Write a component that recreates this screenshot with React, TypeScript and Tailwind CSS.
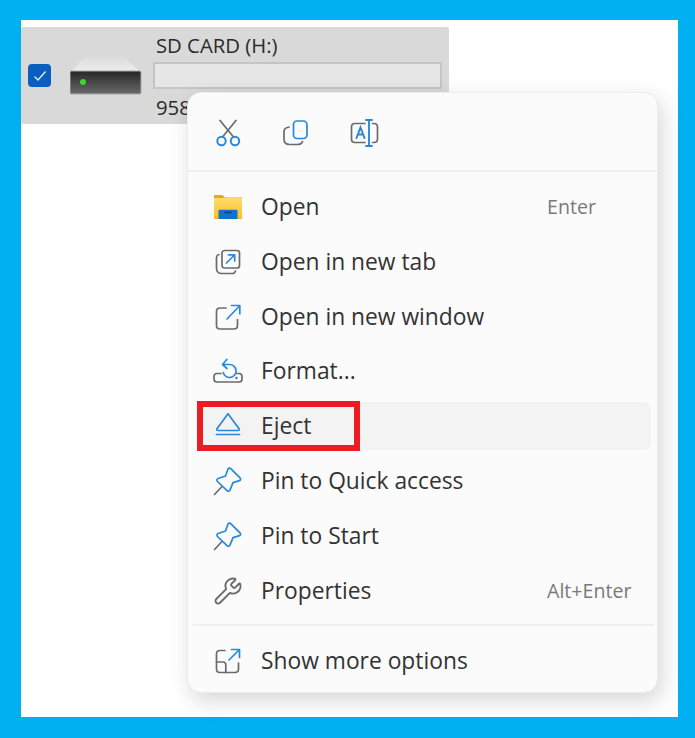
import type { ReactNode } from 'react';
import { Wrench } from 'lucide-react';

const GRAY = '#6b6b6b';
const BLUE = '#2a88dc';

function FolderIcon() {
  return (
    <svg width="28" height="24" viewBox="0 0 28 24">
      <defs>
        <linearGradient id="folderBody" x1="0" y1="0" x2="0" y2="1">
          <stop offset="0" stopColor="#ffdc6c" />
          <stop offset="1" stopColor="#fbbd22" />
        </linearGradient>
      </defs>
      <path d="M0 1.2C0 .5.5 0 1.2 0h7.3L11 2.5h17V8H0z" fill="#e7a90f" />
      <rect x="0" y="3" width="28" height="21" fill="url(#folderBody)" />
      <path d="M4.500 16c0-.8.5-1.300 1.300-1.300h16.400c.8 0 1.300.5 1.300 1.300v8h-19z" fill="#0b74cf" />
      <rect x="10.500" y="16.800" width="7" height="1.400" fill="#063f7e" />
    </svg>
  );
}

function NewTabIcon() {
  return (
    <svg width="26" height="26" viewBox="0 0 26 26" fill="none" strokeWidth="1.700" strokeLinecap="round" strokeLinejoin="round">
      <rect x="7" y="1.500" width="17.500" height="17.500" rx="2.500" stroke={GRAY} />
      <path d="M4 5.500C2.500 6 1.500 7 1.500 8.500v11c0 2.800 2.200 5 5 5h11c1.500 0 2.500-1 3-2.500" stroke={GRAY} />
      <path d="M11.500 14 19.500 6M13.500 5.800h6.200V12" stroke={BLUE} />
    </svg>
  );
}

function NewWindowIcon() {
  return (
    <svg width="26" height="26" viewBox="0 0 26 26" fill="none" strokeWidth="1.700" strokeLinecap="round" strokeLinejoin="round">
      <path d="M11 4H5C3 4 1.500 5.500 1.500 7.500v14c0 2 1.500 3.500 3.500 3.500h14c2 0 3.500-1.500 3.500-3.500v-6" stroke={GRAY} />
      <path d="M12 15 24.500 2M16.500 1.500h8.300v8.300" stroke={BLUE} />
    </svg>
  );
}

function FormatIcon() {
  return (
    <svg width="30" height="26" viewBox="0 0 30 26" fill="none" strokeWidth="1.700" strokeLinecap="round" strokeLinejoin="round">
      <path d="M8 15.500H4c-1.800 0-3 1.200-3 3v2.500c0 1.800 1.200 3 3 3h22c1.800 0 3-1.200 3-3v-2.500c0-1.800-1.200-3-3-3h-2.500" stroke={GRAY} />
      <circle cx="23.500" cy="20" r="1.200" fill={GRAY} />
      <path d="M10 6.500h6.500a6.500 6.500 0 1 1-6.300 8M13.800 1.500 9.500 6.500l4.500 4" stroke={BLUE} />
    </svg>
  );
}

function EjectIcon() {
  return (
    <svg width="26" height="26" viewBox="0 0 26 26" fill="none" stroke={BLUE} strokeWidth="1.700" strokeLinecap="round" strokeLinejoin="round">
      <path d="M13 .8 24 15.800c.5.8.1 1.700-.8 1.700H2.800c-.9 0-1.300-.9-.8-1.700z" />
      <path d="M1.500 21.500h23" />
    </svg>
  );
}

function PinIcon() {
  return (
    <svg width="30" height="30" viewBox="0 0 30 30" fill="none" strokeWidth="1.700" strokeLinecap="round" strokeLinejoin="round">
      <path d="M1.500 28.500 9 20.500" stroke={GRAY} />
      <path d="M15 3c.8-1 2-1.200 3-.2l9 9c1 1 .8 2.400-.5 2.800l-6.500 2-3 7.500c-.5 1.300-2 1.500-3 .5L4.500 15.500c-1-1-.7-2.500.6-3l7.400-2.500z" stroke={BLUE} />
    </svg>
  );
}

function ShowMoreIcon() {
  return (
    <svg width="26" height="26" viewBox="0 0 26 26" fill="none" strokeWidth="1.700" strokeLinecap="round" strokeLinejoin="round">
      <path d="M10 2.500H5C3 2.500 1.500 4 1.500 6v15c0 2 1.500 3.500 3.500 3.500h15c2 0 3.500-1.500 3.500-3.500v-6" stroke={GRAY} />
      <path d="M1.500 14H8c1.500 0 2.800 1.200 2.800 2.800v7.700" stroke={GRAY} />
      <path d="M14 12 24 2M16.500 1.500h8v8" stroke={BLUE} />
    </svg>
  );
}

function CutIcon() {
  return (
    <svg width="32" height="32" viewBox="0 0 32 32" fill="none" strokeWidth="1.700" strokeLinecap="round">
      <path d="M8 3.500 21.500 20M24 3.500 10.500 20" stroke={GRAY} />
      <circle cx="9.500" cy="24" r="4.200" stroke={BLUE} strokeWidth="2" />
      <circle cx="23" cy="24" r="4.200" stroke={BLUE} strokeWidth="2" />
    </svg>
  );
}

function CopyIcon() {
  return (
    <svg width="28" height="28" viewBox="0 0 28 28" fill="none" strokeWidth="1.700" strokeLinecap="round">
      <rect x="11.500" y="2" width="13.500" height="17.500" rx="3.500" stroke={BLUE} />
      <path d="M7 8C3.500 8.500 2 10 2 13v7c0 3.500 2 5.500 5.500 5.500H15c3 0 5-1 5.500-3" stroke={GRAY} />
    </svg>
  );
}

function RenameIcon() {
  return (
    <svg width="30" height="30" viewBox="0 0 30 30" fill="none" strokeWidth="1.700" strokeLinecap="round">
      <path d="M16 5.500H6C4 5.500 2.500 7 2.500 9v12c0 2 1.500 3.500 3.500 3.500h10M23.500 5.500H25c2 0 3.500 1.500 3.500 3.500v12c0 2-1.500 3.500-3.500 3.500h-1.500" stroke={GRAY} />
      <path d="M7.500 20 11.500 9.500 15.500 20M9 16.500h5" stroke={BLUE} strokeWidth="2" />
      <path d="M17 2h6M17 28h6M20 2v26" stroke={BLUE} strokeWidth="1.900" />
    </svg>
  );
}

function DriveIcon() {
  return (
    <svg width="72" height="38" viewBox="0 0 72 38">
      <defs>
        <linearGradient id="driveFront" x1="0" y1="0" x2="0" y2="1">
          <stop offset="0" stopColor="#262626" />
          <stop offset="1" stopColor="#6a6a6a" />
        </linearGradient>
        <linearGradient id="driveTop" x1="0" y1="0" x2="0" y2="1">
          <stop offset="0" stopColor="#dcdcdc" />
          <stop offset="1" stopColor="#ececec" />
        </linearGradient>
      </defs>
      <path d="M15 0h40l14 14H2z" fill="url(#driveTop)" />
      <rect x="0" y="14" width="71" height="23" rx="1.500" fill="url(#driveFront)" stroke="#aaaaaa" />
      <circle cx="13" cy="25" r="3" fill="#39d62c" />
    </svg>
  );
}

type MenuRowProps = {
  icon: ReactNode;
  label: string;
  shortcut?: string;
  active?: boolean;
};

function MenuRow({ icon, label, shortcut, active }: MenuRowProps) {
  return (
    <div className="h-[54.8px] flex items-center">
      <div className={`h-[48px] w-full flex items-center pr-[18px] rounded-[6px] ${active ? 'bg-[#f3f3f3]' : ''}`}>
        <span className="w-[64px] shrink-0 pr-[2px] flex justify-center">{icon}</span>
        <span className="flex-1 text-[22.8px] text-[#333333]">{label}</span>
        {shortcut && <span className="w-[86px] text-[19.6px] text-[#7a7a7a]">{shortcut}</span>}
      </div>
    </div>
  );
}

export default function App() {
  return (
    <div className="w-[695px] h-[738px] bg-[#00b0f0] pt-[20px] pl-[21px] pr-[17px] pb-[21px] font-['Open_Sans',sans-serif] overflow-hidden">
      <div className="relative h-full bg-white pt-[7px]">
        {/* 선택된 드라이브 */}
        <div className="w-[428px] h-[97px] bg-[#d9d9d9] rounded-[2px] flex items-center pl-[7px]">
          <span className="w-[23px] h-[23px] rounded-[4px] bg-[#0a5ebd] flex items-center justify-center">
            <svg width="14" height="12" viewBox="0 0 14 12" fill="none" stroke="#e8f1fb" strokeWidth="1.300">
              <path d="M1.500 6.500 5 10l7.500-8.500" />
            </svg>
          </span>
          <span className="ml-[19px]">
            <DriveIcon />
          </span>
          <div className="ml-[11px] w-[289px] text-[#2b2b2b] text-[20.3px]">
            <div className="pl-[3px] h-[35px] leading-[36px]">SD CARD (H:)</div>
            <div className="h-[27px] border-2 border-[#c5c5c5] bg-[#e6e6e6]" />
            <div className="pl-[3px] h-[35px] leading-[36px]">958</div>
          </div>
        </div>

        {/* 컨텍스트 메뉴 */}
        <div className="absolute left-[166px] top-[72px] w-[471px] h-[601px] rounded-[14px] bg-[#fbfbfb] border border-[#ececec] shadow-[4px_8px_22px_rgba(0,0,0,0.16)]">
          <div className="h-[79px] pt-[3px] border-b-2 border-[#efefef] flex items-center">
            <span className="w-[32px] ml-[24px] flex justify-center"><CutIcon /></span>
            <span className="w-[32px] ml-[36px] flex justify-center"><CopyIcon /></span>
            <span className="w-[32px] ml-[36px] flex justify-center"><RenameIcon /></span>
          </div>
          <div className="pt-[7.7px] ml-[9px] mr-[6px]">
            <MenuRow icon={<FolderIcon />} label="Open" shortcut="Enter" />
            <MenuRow icon={<NewTabIcon />} label="Open in new tab" />
            <MenuRow icon={<NewWindowIcon />} label="Open in new window" />
            <MenuRow icon={<FormatIcon />} label="Format..." />
            <MenuRow icon={<EjectIcon />} label="Eject" active />
            <MenuRow icon={<PinIcon />} label="Pin to Quick access" />
            <MenuRow icon={<PinIcon />} label="Pin to Start" />
            <MenuRow icon={<Wrench size={30} strokeWidth={1.5} color={GRAY} />} label="Properties" shortcut="Alt+Enter" />
          </div>
          <div className="mt-[6.3px] ml-[5px] mr-[3px] border-t-2 border-[#efefef]" />
          <div className="pt-[7px] ml-[9px] mr-[6px]">
            <MenuRow icon={<ShowMoreIcon />} label="Show more options" />
          </div>
        </div>

        {/* 빨간 강조 표시 */}
        <div className="absolute left-[176px] top-[381px] w-[163px] h-[50px] border-[6px] border-[#ed1c24]" />
      </div>
    </div>
  );
}
